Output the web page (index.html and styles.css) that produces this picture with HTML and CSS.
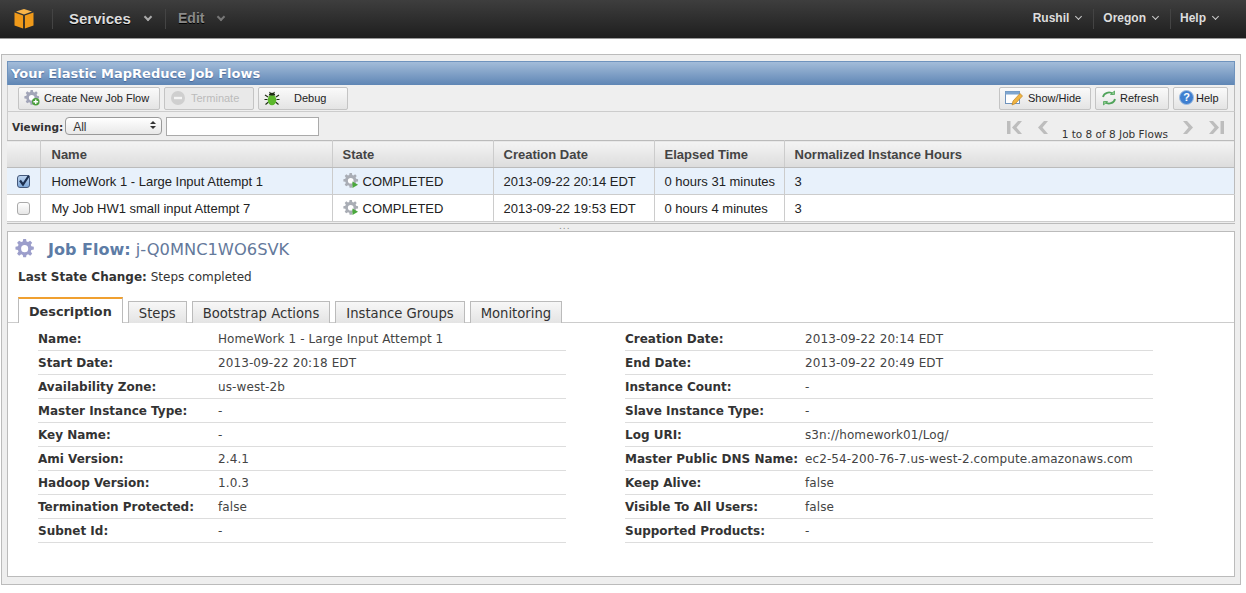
FILE: index.html
```html
<!DOCTYPE html>
<html lang="en">
<head>
    <meta charset="UTF-8">
    <title>Elastic MapReduce Job Flows</title>
    <link rel="stylesheet" href="styles.css">
</head>
<body>

<svg class="defs" width="0" height="0">
    <defs>
        <g id="gear">
            <path d="M7 0h2.400l.4 2.100 1.300.5 1.800-1.200 1.700 1.700-1.200 1.800.5 1.300 2.100.4v2.400l-2.100.4-.5 1.300 1.200 1.800-1.700 1.700-1.800-1.200-1.300.5-.4 2.100h-2.400l-.4-2.100-1.300-.5-1.800 1.200-1.700-1.700 1.200-1.800-.5-1.300-2.100-.4v-2.400l2.100-.4.5-1.300-1.200-1.800 1.700-1.700 1.800 1.200 1.300-.5z" stroke-linejoin="round"/>
            <circle cx="8.200" cy="8.200" r="3" fill="#fff"/>
        </g>
    </defs>
</svg>

<header class="topbar">
    <div class="logo">
        <svg width="22" height="22" viewBox="0 0 22 22">
            <path d="M11 1l8 2.600-8 2.800-8-2.800z" fill="#f9b54a"/>
            <path d="M1.500 4.600l8.600 3v13l-8.600-3z" fill="#f09a1a"/>
            <path d="M20.500 4.600l-8.600 3v13l8.600-3z" fill="#f09a1a"/>
        </svg>
    </div>
    <a class="nav-item services">Services <span class="caret"></span></a>
    <a class="nav-item edit">Edit <span class="caret"></span></a>
    <div class="nav-right">
        <a class="nav-small">Rushil <span class="caret small"></span></a>
        <a class="nav-small">Oregon <span class="caret small"></span></a>
        <a class="nav-small">Help <span class="caret small"></span></a>
    </div>
</header>

<div class="panel">
    <h1 class="panel-title">Your Elastic MapReduce Job Flows</h1>

    <div class="toolbar">
        <div class="tool-group">
            <button class="btn btn-create">
                <svg class="gear-icon" width="16" height="16" viewBox="0 0 17 17"><use href="#gear" fill="#a2a5b8"/><circle cx="12.500" cy="12.500" r="4" fill="#4a9e3c"/><path d="M12.500 10v5M10 12.500h5" stroke="#fff" stroke-width="1.500"/></svg>
                Create New Job Flow
            </button>
            <button class="btn btn-off">
                <svg width="16" height="16" viewBox="0 0 16 16"><circle cx="8" cy="8" r="7" fill="#cfcfcf"/><rect x="4" y="6.800" width="8" height="2.400" fill="#f4f4f4"/></svg>
                Terminate
            </button>
            <button class="btn btn-debug">
                <svg width="16" height="16" viewBox="0 0 16 16">
                    <path d="M1 5l3 2M15 5l-3 2M0.500 9.500h3M15.500 9.500h-3M1.500 14.500l3-2.500M14.500 14.500l-3-2.500M5.500 2l1.500 2M10.500 2l-1.500 2" stroke="#1d2a12" stroke-width="1.100" fill="none"/>
                    <ellipse cx="8" cy="10" rx="4.300" ry="5.300" fill="#5cb82c"/>
                    <path d="M4.800 5.500a3.200 2.800 0 0 1 6.400 0z" fill="#1d2a12"/>
                </svg>
                <span class="debug-label">Debug</span>
            </button>
        </div>
        <div class="tool-group">
            <button class="btn btn-show">
                <svg width="18" height="18" viewBox="0 0 18 18">
                    <rect x="0.500" y="2.500" width="14" height="12" fill="#fff" stroke="#6f93bd"/>
                    <rect x="0.500" y="2.500" width="14" height="3" fill="#7fa6d0"/>
                    <path d="M7 16l1-4 7-7.500 2.500 2.500-7 7.500z" fill="#f2b541" stroke="#b9822a" stroke-width=".7"/>
                </svg>
                Show/Hide
            </button>
            <button class="btn btn-refresh">
                <svg width="16" height="16" viewBox="0 0 16 16" fill="none" stroke="#4fa35a" stroke-width="1.800">
                    <path d="M2 7a6 5.500 0 0 1 10-3"/>
                    <path d="M14 9a6 5.500 0 0 1-10 3"/>
                    <path d="M9.500 4.500h4v-3.500z" fill="#8fd08f" stroke-width=".8"/>
                    <path d="M6.500 11.500h-4v3.500z" fill="#8fd08f" stroke-width=".8"/>
                </svg>
                Refresh
            </button>
            <button class="btn btn-help">
                <svg width="15" height="15" viewBox="0 0 15 15"><circle cx="7.500" cy="7.500" r="7" fill="#3f7fd0" stroke="#9dbbe0"/><text x="7.500" y="11" class="help-q">?</text></svg>
                Help
            </button>
        </div>
    </div>

    <div class="filter">
        <div class="filter-left">
            <label class="viewing" for="view">Viewing:</label>
            <div class="select" id="view">All <span class="updown"></span></div>
            <input class="search" type="text">
        </div>
        <div class="pager">
            <svg width="18" height="15" viewBox="0 0 18 15" fill="#bdbdbd"><rect x="1" y="1" width="3.500" height="13"/><path d="M12 1l4 0-5.500 6.500 5.500 6.500-4 0-6-6.500z"/></svg>
            <svg width="12" height="15" viewBox="0 0 12 15" fill="#bdbdbd"><path d="M7 1l4 0-5.500 6.500 5.500 6.500-4 0-6-6.500z"/></svg>
            <span class="pager-text">1 to 8 of 8 Job Flows</span>
            <svg class="pager-next" width="12" height="15" viewBox="0 0 12 15" fill="#bdbdbd"><path d="M5 1l-4 0 5.500 6.500-5.500 6.500 4 0 6-6.500z"/></svg>
            <svg width="18" height="15" viewBox="0 0 18 15" fill="#bdbdbd"><rect x="13.500" y="1" width="3.500" height="13"/><path d="M6 1l-4 0 5.500 6.500-5.500 6.500 4 0 6-6.500z"/></svg>
        </div>
    </div>

    <table class="flows">
        <colgroup>
            <col class="c-check"><col class="c-name"><col class="c-state"><col class="c-date"><col class="c-time"><col>
        </colgroup>
        <thead>
            <tr>
                <th></th>
                <th class="name-cell">Name</th>
                <th>State</th>
                <th>Creation Date</th>
                <th>Elapsed Time</th>
                <th>Normalized Instance Hours</th>
            </tr>
        </thead>
        <tbody>
            <tr class="selected">
                <td class="check"><span class="box on"><svg width="14" height="14" viewBox="0 0 14 14"><path d="M3 6.500l3 4 6-9" fill="none" stroke="#1c2f4f" stroke-width="2.200"/></svg></span></td>
                <td class="name-cell">HomeWork 1 - Large Input Attempt 1</td>
                <td><svg class="state-icon" width="16" height="16" viewBox="0 0 17 17"><use href="#gear" fill="#a9adb5"/><path d="M10 9l6 3.500-6 3.500z" fill="#4aa83c"/></svg>COMPLETED</td>
                <td>2013-09-22 20:14 EDT</td>
                <td>0 hours 31 minutes</td>
                <td>3</td>
            </tr>
            <tr>
                <td class="check"><span class="box"></span></td>
                <td class="name-cell">My Job HW1 small input Attempt 7</td>
                <td><svg class="state-icon" width="16" height="16" viewBox="0 0 17 17"><use href="#gear" fill="#a9adb5"/><path d="M10 9l6 3.500-6 3.500z" fill="#4aa83c"/></svg>COMPLETED</td>
                <td>2013-09-22 19:53 EDT</td>
                <td>0 hours 4 minutes</td>
                <td>3</td>
            </tr>
        </tbody>
    </table>

    <div class="splitter">...</div>

    <section class="detail">
        <h2 class="detail-title">
            <svg width="20" height="20" viewBox="0 0 17 17"><use href="#gear" fill="#9c9ecb"/></svg>
            <span><b>Job Flow:</b> j-Q0MNC1WO6SVK</span>
        </h2>
        <p class="last-change"><b>Last State Change:</b> Steps completed</p>

        <nav class="tabs">
            <a class="tab active">Description</a>
            <a class="tab">Steps</a>
            <a class="tab">Bootstrap Actions</a>
            <a class="tab">Instance Groups</a>
            <a class="tab">Monitoring</a>
        </nav>

        <div class="fields">
            <dl class="field"><dt>Name:</dt><dd>HomeWork 1 - Large Input Attempt 1</dd></dl>
            <dl class="field"><dt>Creation Date:</dt><dd>2013-09-22 20:14 EDT</dd></dl>
            <dl class="field"><dt>Start Date:</dt><dd>2013-09-22 20:18 EDT</dd></dl>
            <dl class="field"><dt>End Date:</dt><dd>2013-09-22 20:49 EDT</dd></dl>
            <dl class="field"><dt>Availability Zone:</dt><dd>us-west-2b</dd></dl>
            <dl class="field"><dt>Instance Count:</dt><dd>-</dd></dl>
            <dl class="field"><dt>Master Instance Type:</dt><dd>-</dd></dl>
            <dl class="field"><dt>Slave Instance Type:</dt><dd>-</dd></dl>
            <dl class="field"><dt>Key Name:</dt><dd>-</dd></dl>
            <dl class="field"><dt>Log URI:</dt><dd>s3n://homework01/Log/</dd></dl>
            <dl class="field"><dt>Ami Version:</dt><dd>2.4.1</dd></dl>
            <dl class="field"><dt>Master Public DNS Name:</dt><dd>ec2-54-200-76-7.us-west-2.compute.amazonaws.com</dd></dl>
            <dl class="field"><dt>Hadoop Version:</dt><dd>1.0.3</dd></dl>
            <dl class="field"><dt>Keep Alive:</dt><dd>false</dd></dl>
            <dl class="field"><dt>Termination Protected:</dt><dd>false</dd></dl>
            <dl class="field"><dt>Visible To All Users:</dt><dd>false</dd></dl>
            <dl class="field"><dt>Subnet Id:</dt><dd>-</dd></dl>
            <dl class="field"><dt>Supported Products:</dt><dd>-</dd></dl>
        </div>
    </section>
</div>

</body>
</html>
```

FILE: styles.css
```css
* {
    box-sizing: border-box;
}
html, body {
    height: 100%;
}
body {
    margin: 0;
    background-color: #fff;
    font-family: "DejaVu Sans", Verdana, sans-serif;
    font-size: 11px;
    color: #333;
    overflow: hidden;
}
.defs {
    position: absolute;
}

/* top bar */
.topbar {
    display: flex;
    align-items: center;
    height: 39px;
    background: linear-gradient(#3e3e3e, #1e1e1e);
    border-bottom: 1px solid #999;
    font-family: "Liberation Sans", Arial, sans-serif;
}
.logo {
    display: flex;
    width: 53px;
    height: 20px;
    padding-left: 13px;
    align-items: center;
    border-right: 1px solid #444;
}
.nav-item {
    display: flex;
    align-items: center;
    height: 20px;
    padding-bottom: 2px;
    font-size: 15px;
    font-weight: bold;
    color: #ddd;
    text-shadow: 0 1px 0 #000;
}
.services {
    width: 113px;
    padding-left: 16px;
    border-right: 1px solid #444;
}
.edit {
    padding-left: 12px;
    font-size: 14px;
    color: #8a8a8a;
}
.caret {
    display: inline-block;
    width: 6px;
    height: 6px;
    margin: -3px 0 0 14px;
    border-right: 2px solid #aaa;
    border-bottom: 2px solid #aaa;
    transform: rotate(45deg);
}
.edit .caret {
    border-color: #777;
}
.caret.small {
    width: 5px;
    height: 5px;
    margin: -3px 0 0 7px;
    border-width: 1.5px;
    border-color: #ccc;
}
.nav-right {
    display: flex;
    margin-left: auto;
    padding-right: 28px;
}
.nav-small {
    display: flex;
    align-items: center;
    height: 20px;
    padding: 0 12px 2px 9px;
    font-size: 12px;
    font-weight: bold;
    color: #ddd;
    border-left: 1px solid #444;
}
.nav-small:first-child {
    border-left: none;
}
.nav-small:last-child {
    padding-right: 0;
}

/* main panel */
.panel {
    width: 1240px;
    height: 531px;
    margin: 15px 0 0 1px;
    padding: 6px 5px 7px 5px;
    background-color: #eee;
    border: 1px solid #bbb;
    display: flex;
    flex-direction: column;
}
.panel-title {
    height: 24px;
    margin: 0;
    padding-left: 3px;
    font-size: 13px;
    line-height: 23px;
    color: #fff;
    text-shadow: 0 1px 1px #47689a;
    background: linear-gradient(#a3bcd9, #5f86b5);
    border: 1px solid #6f93bd;
    border-bottom: none;
}
.toolbar {
    display: flex;
    justify-content: space-between;
    height: 27px;
    padding: 2px 6px 0 10px;
    background-color: #efefef;
    border-bottom: 1px solid #ccc;
    border-left: 1px solid #ccc;
    border-right: 1px solid #bbb;
}
.tool-group {
    display: flex;
    gap: 4px;
}
.btn {
    display: flex;
    align-items: center;
    gap: 5px;
    height: 23px;
    padding: 0 0 2px 5px;
    font-family: "Liberation Sans", Arial, sans-serif;
    font-size: 11px;
    color: #222;
    background: linear-gradient(#fafafa, #e4e4e4);
    border: 1px solid #c4c4c4;
    border-radius: 2px;
}
.btn-create { width: 142px; gap: 4px; }
.btn-off { width: 90px; color: #bbb; background: #e9e9e9; }
.btn-debug { width: 90px; }
.debug-label { margin-left: 9px; }
.btn-show { width: 92px; gap: 5px; }
.btn-refresh { width: 74px; gap: 3px; }
.btn-help { width: 55px; gap: 2px; }
.help-q {
    font-family: "Liberation Sans", Arial, sans-serif;
    font-size: 11px;
    font-weight: bold;
    fill: #fff;
    text-anchor: middle;
}

.filter {
    display: flex;
    justify-content: space-between;
    height: 28px;
    padding: 5px 9px 0 4px;
    border-left: 1px solid #ccc;
    border-right: 1px solid #bbb;
}
.filter-left {
    display: flex;
    align-items: flex-start;
}
.viewing {
    margin: 4px 2px 0 0;
    font-weight: bold;
    font-size: 10.500px;
    color: #333;
}
.select {
    position: relative;
    width: 97px;
    height: 18px;
    padding: 2px 0 0 7px;
    font-family: "Liberation Sans", Arial, sans-serif;
    font-size: 12px;
    background: linear-gradient(#fff, #e8e8e8);
    border: 1px solid #999;
    border-radius: 4px;
}
.updown {
    position: absolute;
    right: 5px;
    top: 3px;
    border: 3px solid transparent;
    border-bottom: 3px solid #333;
    border-top: none;
}
.updown::after {
    content: "";
    position: absolute;
    left: -3px;
    top: 5px;
    border: 3px solid transparent;
    border-top: 3px solid #333;
    border-bottom: none;
}
.search {
    width: 153px;
    height: 19px;
    margin: 0 0 0 4px;
    background-color: #fff;
    border: 1px solid #aaa;
}
.pager {
    display: flex;
    align-items: flex-start;
    gap: 13px;
    padding-top: 3px;
}
.pager-text {
    margin-top: 8px;
    font-size: 10.500px;
    color: #333;
    white-space: nowrap;
}
.pager-next { margin-left: 1px; }

/* job flow table */
.flows {
    width: 100%;
    table-layout: fixed;
    border-collapse: collapse;
    font-family: "Liberation Sans", Arial, sans-serif;
    font-size: 13px;
    color: #222;
    border-top: 1px solid #bbb;
}
.c-check { width: 33px; }
.c-name { width: 292px; }
.c-state { width: 161px; }
.c-date { width: 161px; }
.c-time { width: 130px; }
.flows th {
    height: 27px;
    padding: 1px 0 0 10px;
    font-size: 13px;
    text-align: left;
    color: #444;
    background: linear-gradient(#f4f4f4, #dcdcdc);
    border-right: 1px solid #ccc;
    border-bottom: 1px solid #bbb;
}
.flows td {
    height: 27px;
    padding: 0 0 0 10px;
    background-color: #fff;
    border-right: 1px solid #ccc;
    border-bottom: 1px solid #ccc;
    white-space: nowrap;
}
.flows .name-cell {
    padding-left: 11px;
}
.flows th:last-child, .flows td:last-child {
    border-right: 1px solid #bbb;
}
.flows tr.selected td {
    background-color: #e8f1fb;
}
.flows td.check {
    padding: 0;
    text-align: center;
}
.box {
    display: inline-block;
    width: 13px;
    height: 13px;
    margin-top: 3px;
    background: linear-gradient(#fff, #e6e6e6);
    border: 1px solid #aaa;
    border-radius: 3px;
}
.box.on {
    background: linear-gradient(#bcd3ee, #7fa8d8);
    border-color: #44587a;
}
.box svg {
    display: block;
    margin: -2px 0 0 -1px;
}
.state-icon {
    margin-right: 4px;
    vertical-align: -3px;
}
.splitter {
    height: 9px;
    margin-top: 1px;
    padding-left: 552px;
    background-color: #eee;
    border-top: 1px solid #bbb;
    font-size: 9px;
    line-height: 4px;
    letter-spacing: 1px;
    color: #888;
}

/* detail panel */
.detail {
    flex: 1;
    min-height: 0;
    margin-top: -1px;
    background-color: #fff;
    border: 1px solid #bbb;
}
.detail-title {
    display: flex;
    align-items: center;
    gap: 13px;
    margin: 0;
    padding: 7px 0 0 7px;
    font-size: 16.300px;
    font-weight: normal;
    color: #64799b;
}
.detail-title b {
    font-size: 16px;
    color: #5d7ca6;
}
.last-change {
    margin: 0;
    padding: 11px 0 0 10px;
    font-size: 12px;
}
.tabs {
    display: flex;
    align-items: flex-end;
    gap: 5px;
    height: 27px;
    margin-top: 12px;
    padding-left: 10px;
    border-bottom: 1px solid #ccc;
}
.tab {
    display: block;
    height: 22px;
    padding: 4px 10px 0;
    font-size: 13.200px;
    color: #333;
    background: linear-gradient(#f7f7f7, #e4e4e4);
    border: 1px solid #bbb;
    border-bottom: none;
    margin-bottom: -1px;
}
.tab.active {
    height: 26px;
    padding-top: 5px;
    font-weight: bold;
    font-size: 12.800px;
    background: #fff;
    border-top: 2px solid #f0a030;
}
.fields {
    display: grid;
    grid-template-columns: 528px 528px;
    column-gap: 59px;
    padding: 4px 0 0 30px;
}
.field {
    display: flex;
    align-items: center;
    height: 24px;
    margin: 0;
    border-bottom: 1px solid #ddd;
    font-size: 12px;
}
.field dt {
    width: 180px;
    font-weight: bold;
}
.field dd {
    margin: 0;
    color: #444;
    letter-spacing: .1px;
}
```
